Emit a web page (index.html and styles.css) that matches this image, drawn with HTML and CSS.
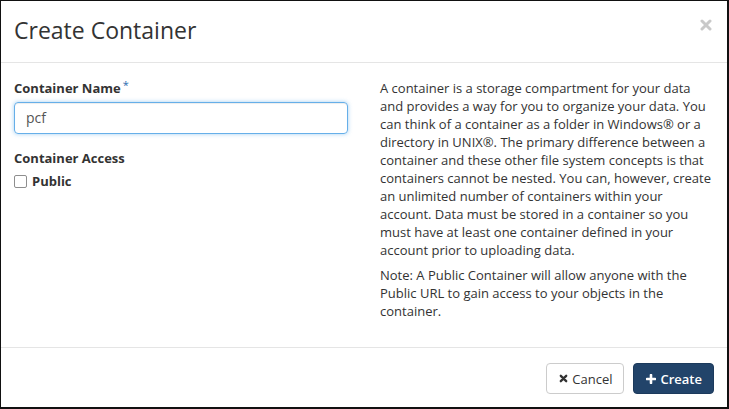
FILE: index.html
```html
<!DOCTYPE html>
<html>
<head>
<meta charset="utf-8">
<link rel="stylesheet" href="styles.css">
</head>
<body>
<div class="modal">
  <div class="modal-header">
    <h3 class="modal-title">Create Container</h3>
    <span class="close" aria-label="Close">
      <svg width="12" height="12" viewBox="0 0 12 12"><path d="M2 2 L10 10 M10 2 L2 10" stroke="#c9c9c9" stroke-width="3" stroke-linecap="round"/></svg>
    </span>
  </div>
  <div class="modal-body">
    <div class="col col-left">
      <div class="form-group">
        <div class="label-row"><label class="label">Container Name</label><span class="req">*</span></div>
        <div class="input">pcf</div>
      </div>
      <div class="form-group">
        <label class="label">Container Access</label>
        <label class="check"><span class="box"></span>Public</label>
      </div>
    </div>
    <div class="col col-right">
      <p>A container is a storage compartment for your data and provides a way for you to organize your data. You can think of a container as a folder in Windows® or a directory in UNIX®. The primary difference between a container and these other file system concepts is that containers cannot be nested. You can, however, create an unlimited number of containers within your account. Data must be stored in a container so you must have at least one container defined in your account prior to uploading data.</p>
      <p>Note: A Public Container will allow anyone with the Public URL to gain access to your objects in the container.</p>
    </div>
  </div>
  <div class="modal-footer">
    <span class="btn btn-default">
      <svg width="9" height="9" viewBox="0 0 10 10"><path d="M2 2 L8 8 M8 2 L2 8" stroke="#333" stroke-width="2.6" stroke-linecap="round"/></svg>
      Cancel
    </span>
    <span class="btn btn-primary">
      <svg width="10" height="10" viewBox="0 0 10 10"><path d="M5 1 V9 M1 5 H9" stroke="#fff" stroke-width="2.6" stroke-linecap="round"/></svg>
      Create
    </span>
  </div>
</div>
</body>
</html>
```
FILE: styles.css
```css
html, body {
  margin: 0;
  padding: 0;
  height: 100%;
  background: #111;
}
body {
  padding: 1px 2px 2px 1px;
  box-sizing: border-box;
  font-family: "Open Sans", "Liberation Sans", sans-serif;
  font-size: 13px;
  line-height: 18px;
  color: #333;
}
.modal {
  background: #fff;
  height: 100%;
  display: flex;
  flex-direction: column;
}
.modal-header {
  height: 61px;
  border-bottom: 1px solid #e5e5e5;
  display: flex;
  align-items: center;
  justify-content: space-between;
  padding: 0 15px 0 13px;
}
.modal-title {
  margin: 0;
  font-size: 23px;
  font-weight: 400;
  line-height: 28px;
  color: #333;
  position: relative;
  top: -2px;
}
.close {
  display: flex;
  position: relative;
  top: -7px;
}
.modal-body {
  flex: 1;
  display: flex;
  gap: 30px;
  padding: 16px 13px 0 13px;
}
.col {
  flex: 1;
}
.form-group {
  margin-bottom: 15px;
}
.label-row {
  display: flex;
  align-items: flex-start;
  margin-bottom: 5px;
}
.label-row .label {
  margin-bottom: 0;
}
.label {
  display: block;
  font-weight: 700;
  margin-bottom: 5px;
}
.req {
  color: #2b6cb0;
  font-size: 11px;
  line-height: 10px;
  margin-left: 2px;
  margin-top: 1px;
}
.input {
  height: 32px;
  box-sizing: border-box;
  border: 1px solid #66afe9;
  border-radius: 4px;
  box-shadow: inset 0 1px 1px rgba(0,0,0,.075), 0 0 4px rgba(102,175,233,.6);
  padding: 6px 11px;
  color: #555;
  font-size: 14px;
  line-height: 18px;
}
.check {
  display: flex;
  align-items: center;
  font-weight: 700;
  margin-top: 0;
}
.box {
  width: 11px;
  height: 11px;
  border: 1px solid #8e8e8e;
  border-radius: 2px;
  margin: 0 5px 0 0;
}
.col-right {
  padding-left: 2px;
}
.col-right p {
  margin: 0 0 7px 0;
}
.modal-footer {
  height: 60px;
  border-top: 1px solid #e5e5e5;
  display: flex;
  justify-content: flex-end;
  align-items: center;
  gap: 9px;
  padding: 0 13px;
  box-sizing: border-box;
}
.btn {
  display: inline-flex;
  align-items: center;
  gap: 4px;
  height: 31px;
  box-sizing: border-box;
  padding: 0 11px 0 12px;
  border-radius: 4px;
  font-size: 13px;
  border: 1px solid transparent;
  position: relative;
  top: 1px;
}
.btn-default {
  border-color: #ccc;
  color: #333;
  background: #fff;
}
.btn-primary {
  background: #22446a;
  border-color: #1c3a5c;
  color: #fff;
  font-weight: 600;
}
```
